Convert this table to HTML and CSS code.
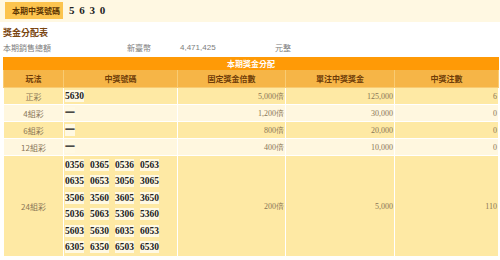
FILE: index.html
```html
<!DOCTYPE html>
<html lang="zh-Hant">
<head>
<meta charset="utf-8">
<link rel="stylesheet" href="styles.css">
</head>
<body>
<div class="topbar">
  <span class="label">本期中獎號碼</span>
  <span class="digits">5 6 3 0</span>
</div>
<div class="wrap">
  <h2 class="title">獎金分配表</h2>
  <div class="sales">
    <span class="s1">本期銷售總額</span>
    <span class="s2">新臺幣</span>
    <span class="s3">4,471,425</span>
    <span class="s4">元整</span>
  </div>
  <table class="prize">
    <colgroup>
      <col class="c1"><col class="c2"><col class="c3"><col class="c4"><col class="c5">
    </colgroup>
    <thead>
      <tr><th colspan="5" class="cap">本期獎金分配</th></tr>
      <tr class="head"><th>玩法</th><th>中獎號碼</th><th>固定獎金倍數</th><th>單注中獎獎金</th><th>中獎注數</th></tr>
    </thead>
    <tbody>
      <tr class="y"><td class="k">正彩</td><td class="n"><span class="num">5630</span></td><td class="r">5,000倍</td><td class="r">125,000</td><td class="r">6</td></tr>
      <tr class="w"><td class="k">4組彩</td><td class="n"><span class="num">一</span></td><td class="r">1,200倍</td><td class="r">30,000</td><td class="r">0</td></tr>
      <tr class="y"><td class="k">6組彩</td><td class="n"><span class="num">一</span></td><td class="r">800倍</td><td class="r">20,000</td><td class="r">0</td></tr>
      <tr class="w"><td class="k">12組彩</td><td class="n"><span class="num">一</span></td><td class="r">400倍</td><td class="r">10,000</td><td class="r">0</td></tr>
      <tr class="y big"><td class="k">24組彩</td><td class="n">
        <div class="grid">
          <span class="num">0356</span><span class="num">0365</span><span class="num">0536</span><span class="num">0563</span>
          <span class="num">0635</span><span class="num">0653</span><span class="num">3056</span><span class="num">3065</span>
          <span class="num">3506</span><span class="num">3560</span><span class="num">3605</span><span class="num">3650</span>
          <span class="num">5036</span><span class="num">5063</span><span class="num">5306</span><span class="num">5360</span>
          <span class="num">5603</span><span class="num">5630</span><span class="num">6035</span><span class="num">6053</span>
          <span class="num">6305</span><span class="num">6350</span><span class="num">6503</span><span class="num">6530</span>
        </div>
      </td><td class="r">200倍</td><td class="r">5,000</td><td class="r">110</td></tr>
    </tbody>
  </table>
</div>
</body>
</html>
```
FILE: styles.css
```css
html, body { margin: 0; padding: 0; background: #ffffff; }
body {
  font-family: "Noto Sans CJK TC", "Noto Sans", sans-serif;
  font-size: 8px;
  color: #8a7656;
  width: 500px;
  height: 260px;
  overflow: hidden;
}
.topbar {
  height: 22px;
  background: #fff8e2;
  display: flex;
  align-items: center;
  padding-left: 5px;
}
.label {
  background: #fcc44e;
  color: #5a3300;
  font-weight: bold;
  font-size: 8px;
  height: 17px;
  line-height: 17px;
  padding: 0 2px 0 7px;
  width: 49px;
  margin-top: -2px;
}
.digits {
  font-family: "Liberation Serif", serif;
  font-weight: bold;
  font-size: 11px;
  color: #222;
  margin-left: 6px;
  letter-spacing: 1px;
  margin-top: -2px;
}
.wrap { padding: 0 3px; }
.title {
  margin: 5px 0 0 0;
  font-size: 9px;
  font-weight: bold;
  color: #7a4510;
  line-height: 12px;
  height: 13px;
}
.sales {
  display: flex;
  height: 17px;
  line-height: 16px;
  color: #7d7d7d;
}
.s1 { width: 124px; }
.s2 { width: 53px; }
.s3 { width: 95px; font-family: "Liberation Sans", sans-serif; font-size: 8px; }
.prize {
  width: 495px;
  border-collapse: collapse;
  table-layout: fixed;
}
.c1 { width: 60px; }
.c2 { width: 114px; }
.c3 { width: 108px; }
.c4 { width: 109px; }
.c5 { width: 104px; }
.prize th, .prize td {
  border: 1px solid #ffffff;
  padding: 0;
}
.prize th.cap {
  background: #ff9a06;
  color: #ffffff;
  height: 11px;
  line-height: 11px;
  font-size: 8px;
  border-color: #ff9a06;
}
.head th {
  background: #f6b547;
  color: #6e3c08;
  height: 17px;
  font-size: 8px;
  border-color: #f9cb72;
  border-top: none;
}
.prize td { height: 16px; }
.y td { background: #fee9a4; }
.w td { background: #fff7df; }
td.k { text-align: center; }
td.r {
  text-align: right;
  font-family: "Liberation Serif", serif;
  font-size: 8px;
  padding-right: 1px;
}
td.n { padding-left: 1px; }
.num {
  display: inline-block;
  font-family: "Liberation Serif", serif;
  font-weight: bold;
  font-size: 9.5px;
  color: #222;
  background: #fff9e3;
  line-height: 12px;
  padding: 0;
}
.big td { height: 100px; }
.grid {
  display: grid;
  grid-template-columns: repeat(4, max-content);
  column-gap: 6px;
  row-gap: 4.6px;
}
```
